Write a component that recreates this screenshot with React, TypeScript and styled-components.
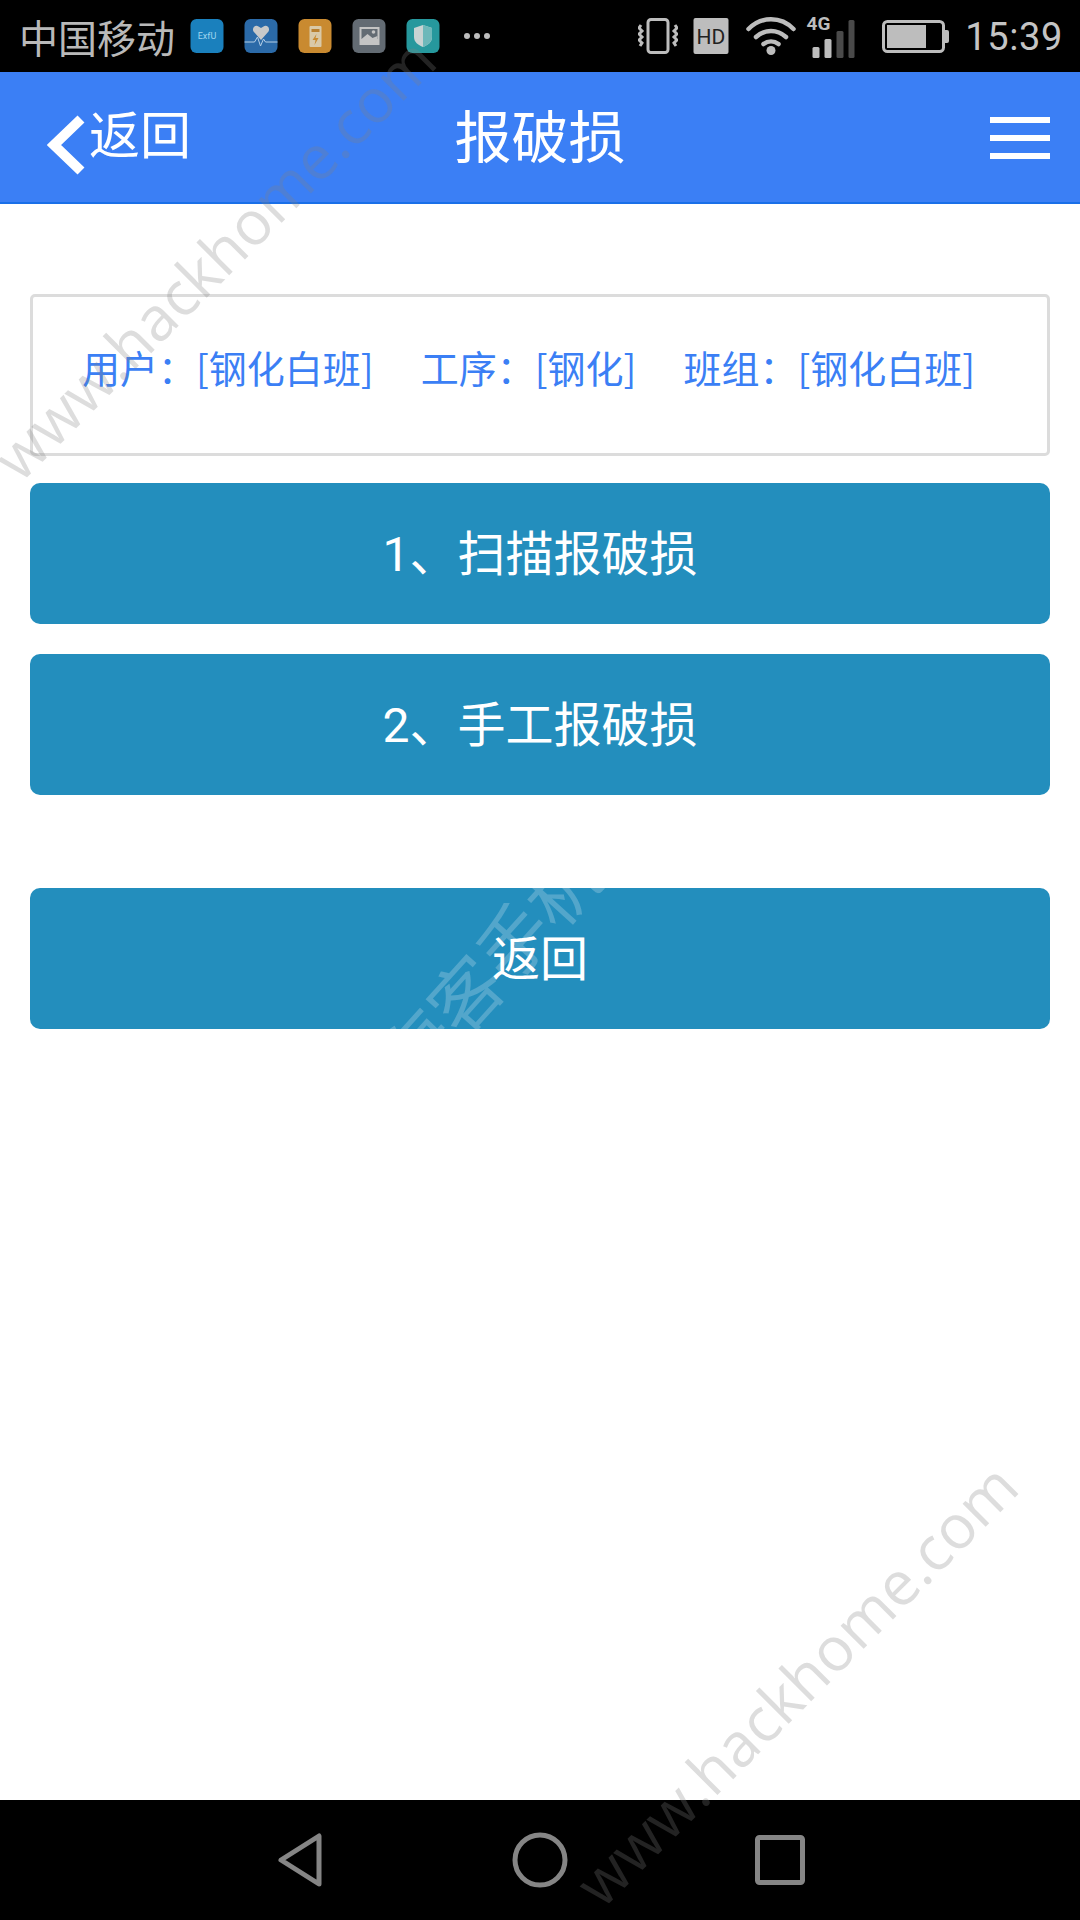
import React from "react";
import styled, { createGlobalStyle } from "styled-components";

const GlobalStyle = createGlobalStyle`
  html, body {
    margin: 0;
    padding: 0;
    background: #fff;
  }
  * {
    box-sizing: border-box;
  }
`;

const CJK = `"Noto Sans CJK SC", "Noto Sans", sans-serif`;

const Page = styled.div`
  position: relative;
  width: 1080px;
  height: 1920px;
  display: flex;
  flex-direction: column;
  overflow: hidden;
  font-family: ${CJK};
`;

const StatusBar = styled.div`
  height: 72px;
  flex: none;
  background: #000;
  display: flex;
  align-items: center;
  padding: 0 17px 0 19px;
  color: #b9b9b9;
`;

const Carrier = styled.span`
  font-size: 39px;
  line-height: 72px;
  width: 171px;
  white-space: nowrap;
`;

const NotifyIcons = styled.div`
  display: flex;
  align-items: center;
  gap: 20px;
  flex: 1;
`;

const NotifyIcon = styled.svg`
  width: 34px;
  height: 34px;
  display: block;
`;

const Dots = styled.svg`
  width: 28px;
  height: 8px;
  margin-left: 3px;
`;

const SysIcons = styled.div`
  display: flex;
  align-items: center;
  height: 72px;
`;

const SysIcon = styled.svg<{ $mr: number }>`
  display: block;
  margin-right: ${(p) => p.$mr}px;
`;

const Clock = styled.span`
  font-family: Roboto, sans-serif;
  font-size: 38px;
  line-height: 72px;
  letter-spacing: 0.6px;
  padding-top: 2px;
  color: #c4c4c4;
`;

const Header = styled.header`
  height: 132px;
  flex: none;
  background: #3b7ff5;
  border-bottom: 2px solid #1a6fe8;
  display: grid;
  grid-template-columns: 1fr auto 1fr;
  align-items: center;
  padding: 0 30px;
  color: #fff;
`;

const BackLink = styled.div`
  display: flex;
  align-items: center;
  gap: 4px;
  margin-left: 17px;
  font-size: 51px;
  line-height: 60px;
`;

const BackChevron = styled.svg`
  display: block;
  margin-top: 16px;
`;

const BackLabel = styled.span`
  margin-top: -10px;
`;

const Title = styled.h1`
  margin: -8px 0 0;
  font-size: 57px;
  line-height: 70px;
  font-weight: 400;
`;

const MenuButton = styled.div`
  justify-self: end;
  width: 60px;
  margin-top: 2px;
  display: flex;
  flex-direction: column;
  gap: 12px;
`;

const MenuBar = styled.span`
  display: block;
  height: 6px;
  background: #fff;
`;

const Main = styled.main`
  flex: 1;
  background: #fff;
  padding: 90px 30px 0;
  display: flex;
  flex-direction: column;
`;

const InfoBox = styled.div`
  height: 162px;
  border: 3px solid #dcdcdc;
  border-radius: 5px;
  margin-bottom: 27px;
  display: flex;
  gap: 47px;
  padding: 42px 0 0 49px;
  color: #3b7ff5;
  font-size: 38px;
  line-height: 56px;
  white-space: nowrap;
`;

const ActionButton = styled.button<{ $mt?: number }>`
  position: relative;
  overflow: hidden;
  height: 141px;
  flex: none;
  width: 100%;
  margin: ${(p) => p.$mt ?? 0}px 0 0;
  border: 0;
  border-radius: 10px;
  background: #238ebd;
  color: #fff;
  font-family: Roboto, ${CJK};
  font-size: 48px;
  line-height: 60px;
  padding: 0;
`;

const ButtonLabel = styled.span`
  position: relative;
  top: 1px;
`;

const ButtonMark = styled.span`
  position: absolute;
  left: 366px;
  top: 149px;
  font-size: 72px;
  line-height: 80px;
  white-space: nowrap;
  color: rgba(255, 255, 255, 0.22);
  transform: rotate(-48deg);
  transform-origin: left center;
`;

const NavBar = styled.nav`
  position: relative;
  height: 120px;
  flex: none;
  background: #000;
  display: flex;
  align-items: center;
  padding-left: 277px;
`;

const NavIcon = styled.svg<{ $mr: number }>`
  display: block;
  margin-right: ${(p) => p.$mr}px;
`;

const Watermark = styled.div<{ $x: number; $y: number }>`
  position: absolute;
  left: ${(p) => p.$x}px;
  top: ${(p) => p.$y}px;
  font-family: "Open Sans", "Noto Sans", sans-serif;
  font-size: 61px;
  line-height: 80px;
  white-space: nowrap;
  color: rgba(128, 128, 128, 0.27);
  transform: rotate(-45deg);
  transform-origin: left center;
  pointer-events: none;
`;

function StatusIcons() {
  return (
    <NotifyIcons>
      <NotifyIcon viewBox="0 0 33 34">
        <rect width="33" height="34" rx="6" fill="#1a80bd" />
        <text x="16.5" y="20" textAnchor="middle" fontSize="9" fontFamily="Roboto, sans-serif" fill="#9fd4ee">
          ExfU
        </text>
      </NotifyIcon>
      <NotifyIcon viewBox="0 0 33 34">
        <rect width="33" height="34" rx="6" fill="#2b6aa8" />
        <path d="M16.5 21 9 12.5c-2-4 2-7 5-5l2.500 1.500 2.500-1.500c3-2 7 1 5 5z" fill="#c9c9c9" />
        <path d="M0 23h10l3-5 3 9 3-7 2 3h12" fill="none" stroke="#b5cfe6" strokeWidth="1" />
      </NotifyIcon>
      <NotifyIcon viewBox="0 0 33 34">
        <rect width="33" height="34" rx="6" fill="#c98a30" />
        <rect x="11" y="7" width="12" height="21" rx="1" fill="#d9c9a8" />
        <rect x="13" y="10" width="8" height="3" fill="#b98030" />
        <path d="M18 15l-4 6h3l-1 5 4-7h-3z" fill="#c98a30" />
      </NotifyIcon>
      <NotifyIcon viewBox="0 0 33 34">
        <rect width="33" height="34" rx="6" fill="#636b73" />
        <rect x="7" y="8" width="20" height="18" fill="#c4c4c4" />
        <rect x="9" y="10" width="16" height="10" fill="#636b73" />
        <path d="M9 20l6-5 5 4 5-2v3z" fill="#c4c4c4" />
        <circle cx="21" cy="13" r="1.800" fill="#c4c4c4" />
      </NotifyIcon>
      <NotifyIcon viewBox="0 0 33 34">
        <rect width="33" height="34" rx="6" fill="#26989d" />
        <path d="M16.500 6l9 3v9c0 5-4 8-9 10-5-2-9-5-9-10V9z" fill="#c8d3d3" />
        <path d="M16.500 6l9 3v9c0 5-4 8-9 10z" fill="#6db8ba" />
      </NotifyIcon>
      <Dots viewBox="0 0 28 8">
        <circle cx="4" cy="4" r="3" fill="#bdbdbd" />
        <circle cx="14" cy="4" r="3" fill="#bdbdbd" />
        <circle cx="24" cy="4" r="3" fill="#bdbdbd" />
      </Dots>
    </NotifyIcons>
  );
}

function SystemIcons() {
  return (
    <SysIcons>
      <SysIcon $mr={15} width="40" height="36" viewBox="0 0 40 36">
        <rect x="10" y="1.500" width="20" height="33" rx="3" fill="none" stroke="#bdbdbd" strokeWidth="3" />
        <path d="M3 7 1 10l3 3-3 3 3 3-3 3 3 3-2 3" fill="none" stroke="#bdbdbd" strokeWidth="3" />
        <path d="M37 7l2 3-3 3 3 3-3 3 3 3-3 3 2 3" fill="none" stroke="#bdbdbd" strokeWidth="3" />
      </SysIcon>
      <SysIcon $mr={17} width="36" height="36" viewBox="0 0 35 36">
        <rect width="35" height="36" rx="2" fill="#bdbdbd" />
        <text x="17.500" y="26" textAnchor="middle" fontSize="21" fontFamily="Roboto, sans-serif" fill="#222">
          HD
        </text>
      </SysIcon>
      <SysIcon $mr={10} width="50" height="38" viewBox="0 0 50 38">
        <g fill="none" stroke="#bdbdbd" strokeWidth="4.500" strokeLinecap="round">
          <path d="M2.500 12C15-1 35-1 47.500 12" />
          <path d="M10 20c9-8 21-8 30 0" />
          <path d="M17.500 27c4.500-3.500 10.500-3.500 15 0" />
        </g>
        <circle cx="25" cy="33.500" r="4.500" fill="#bdbdbd" />
      </SysIcon>
      <SysIcon $mr={27} width="49" height="44" viewBox="0 0 48 44">
        <text x="0" y="16" fontSize="19" fontWeight="700" fontFamily="Roboto, sans-serif" fill="#bdbdbd">
          4G
        </text>
        <rect x="6" y="33" width="7" height="11" rx="1.500" fill="#bdbdbd" />
        <rect x="18" y="25" width="7" height="19" rx="1.500" fill="#bdbdbd" />
        <rect x="30" y="17" width="7" height="27" rx="1.500" fill="#4a4a4a" />
        <rect x="42" y="6" width="6" height="38" rx="1.500" fill="#4a4a4a" />
      </SysIcon>
      <SysIcon $mr={16} width="67" height="33" viewBox="0 0 67 33">
        <rect x="1.500" y="1.500" width="60" height="30" rx="4" fill="none" stroke="#bdbdbd" strokeWidth="3" />
        <rect x="5" y="5" width="39" height="23" fill="#bdbdbd" />
        <path d="M63 10h2a2 2 0 0 1 2 2v9a2 2 0 0 1-2 2h-2z" fill="#bdbdbd" />
      </SysIcon>
      <Clock>15:39</Clock>
    </SysIcons>
  );
}

export default function App() {
  return (
    <>
      <GlobalStyle />
      <Page>
        <StatusBar>
          <Carrier>中国移动</Carrier>
          <StatusIcons />
          <SystemIcons />
        </StatusBar>
        <Header>
          <BackLink>
            <BackChevron width="38" height="60" viewBox="0 0 38 60">
              <path d="M34 4 7 30l27 26" fill="none" stroke="#fff" strokeWidth="10" />
            </BackChevron>
            <BackLabel>返回</BackLabel>
          </BackLink>
          <Title>报破损</Title>
          <MenuButton>
            <MenuBar />
            <MenuBar />
            <MenuBar />
          </MenuButton>
        </Header>
        <Main>
          <InfoBox>
            <span>用户：[钢化白班]</span>
            <span>工序：[钢化]</span>
            <span>班组：[钢化白班]</span>
          </InfoBox>
          <ActionButton>
            <ButtonLabel>1、扫描报破损</ButtonLabel>
          </ActionButton>
          <ActionButton $mt={30}>
            <ButtonLabel>2、手工报破损</ButtonLabel>
          </ActionButton>
          <ActionButton $mt={93}>
            <ButtonMark>海客手机站</ButtonMark>
            <ButtonLabel>返回</ButtonLabel>
          </ActionButton>
        </Main>
        <NavBar>
          <NavIcon $mr={187} width="48" height="56" viewBox="0 0 48 56">
            <path d="M42 4v48L4 28z" fill="none" stroke="#858585" strokeWidth="5" strokeLinejoin="round" />
          </NavIcon>
          <NavIcon $mr={187} width="56" height="56" viewBox="0 0 56 56">
            <circle cx="28" cy="28" r="25" fill="none" stroke="#858585" strokeWidth="5" />
          </NavIcon>
          <NavIcon $mr={0} width="50" height="50" viewBox="0 0 50 50">
            <rect x="2.500" y="2.500" width="45" height="45" rx="2" fill="none" stroke="#858585" strokeWidth="5" />
          </NavIcon>
        </NavBar>
        <Watermark $x={4} $y={428}>www.hackhome.com</Watermark>
        <Watermark $x={586} $y={1854}>www.hackhome.com</Watermark>
      </Page>
    </>
  );
}
